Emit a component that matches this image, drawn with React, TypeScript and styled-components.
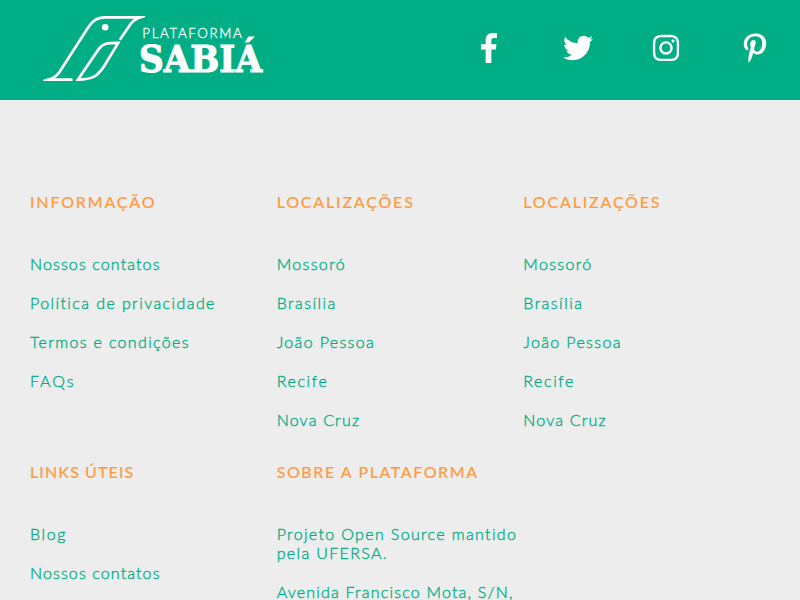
import React from "react";
import styled, { createGlobalStyle } from "styled-components";
import { FaTwitter, FaInstagram, FaPinterestP } from "react-icons/fa";

const GlobalStyle = createGlobalStyle`
  * { box-sizing: border-box; margin: 0; padding: 0; }
  html, body { height: 100%; overflow: hidden; }
  body { background: #ededed; font-family: Lato, sans-serif; }
`;

const Header = styled.header`
  display: flex;
  align-items: center;
  height: 100px;
  background: #00ad85;
  color: #fff;
`;

const Logo = styled.svg`
  display: block;
  width: 230px;
  height: 100px;
  margin-left: 40px;
  overflow: visible;
`;

const SocialList = styled.nav`
  display: grid;
  grid-template-columns: repeat(4, 88.67px);
  margin-left: 174.75px;
  padding-bottom: 4px;
`;

const SocialLink = styled.a`
  display: flex;
  justify-content: center;
  color: #fff;
  svg { display: block; height: 30px; }
`;

const Footer = styled.footer`
  display: grid;
  grid-template-columns: repeat(3, 246.67px);
  row-gap: 33px;
  padding: 92px 30px 0;
`;

const Column = styled.section``;

const Title = styled.h2<{ $spacing: number }>`
  margin-bottom: 43px;
  color: #ff9b3f;
  font-size: 16px;
  font-weight: 500;
  line-height: 19px;
  letter-spacing: ${(p) => p.$spacing}px;
  -webkit-text-stroke: 0.1px #ff9b3f;
  white-space: nowrap;
`;

const Items = styled.ul`
  display: flex;
  flex-direction: column;
  gap: 20px;
  list-style: none;
`;

const Item = styled.li<{ $spacing: number }>`
  color: #00ad85;
  font-size: 16px;
  font-weight: 300;
  line-height: 19px;
  letter-spacing: ${(p) => p.$spacing}px;
  -webkit-text-stroke: 0.35px #00ad85;
  white-space: pre;
`;

type Entry = [text: string, spacing: number];

const cities: Entry[] = [
  ["Mossoró", 1.35],
  ["Brasília", 1.45],
  ["João Pessoa", 1.35],
  ["Recife", 1.6],
  ["Nova Cruz", 1.2],
];

const columns: { title: Entry; items: Entry[] }[] = [
  {
    title: ["INFORMAÇÃO", 1.8],
    items: [
      ["Nossos contatos", 1.12],
      ["Política de privacidade", 1.41],
      ["Termos e condições", 1.33],
      ["FAQs", 1.95],
    ],
  },
  { title: ["LOCALIZAÇÕES", 1.8], items: cities },
  { title: ["LOCALIZAÇÕES", 1.8], items: cities },
  {
    title: ["LINKS ÚTEIS", 1.1],
    items: [
      ["Blog", 1.6],
      ["Nossos contatos", 1.12],
    ],
  },
  {
    title: ["SOBRE A PLATAFORMA", 1.57],
    items: [
      ["Projeto Open Source mantido\npela UFERSA.", 1.35],
      ["Avenida Francisco Mota, S/N,", 1.2],
    ],
  },
];

const SabiaLogo = () => (
  <Logo viewBox="40 0 230 100" role="img" aria-label="Plataforma Sabiá">
    <g fill="none" stroke="#fff" strokeWidth="2.7" strokeLinejoin="miter">
      <path d="M72.5 79.6H47C52 79.2 56 77 59.5 72L86.5 30C92.5 20.5 96.5 17.3 105.5 17.3H140.5C136 18.3 133.5 20.3 130.5 24.3L119.8 39.8" />
      <path d="M78 79.6L98.5 49.4C103 43.2 107.500 42.900 118.200 42.900L104.500 65.500C97.500 76.500 92.500 79.600 78 79.600Z" />
    </g>
    <path d="M43 81L44 79.3C49 78.7 51 78 54 76.5L56 81Z M139 16H145.5L144.3 17.7C140 18.3 138 19 135 21.5L133 17Z" fill="#fff" />
    <circle cx="105.2" cy="27.2" r="3.3" fill="#fff" />
    <text x="142.3" y="38.2" fill="#fff" fontFamily="Lato" fontWeight="300" fontSize="13.4" stroke="#fff" strokeWidth="0.3" textLength="99.5" lengthAdjust="spacing">PLATAFORMA</text>
    <text x="139" y="72.3" fill="#fff" stroke="#fff" strokeWidth="1.1" fontFamily="DejaVu Serif" fontWeight="700" fontSize="37.8" textLength="123" lengthAdjust="spacingAndGlyphs">SABIÁ</text>
  </Logo>
);

const FacebookIcon = () => (
  <svg width="16" height="30" viewBox="0 0 264 512" preserveAspectRatio="none" fill="currentColor" aria-hidden="true">
    <path d="M76.7 512V283H0v-91h76.7v-71.7C76.7 42.4 124.3 0 193.8 0c33.3 0 61.9 2.5 70.2 3.6V85h-48.2c-37.8 0-45.1 18-45.1 44.3V192H256l-11.7 91h-73.6v229" />
  </svg>
);

export default function App() {
  return (
    <>
      <GlobalStyle />
      <Header>
        <SabiaLogo />
        <SocialList>
          <SocialLink aria-label="Facebook"><FacebookIcon /></SocialLink>
          <SocialLink aria-label="Twitter"><FaTwitter size={30} /></SocialLink>
          <SocialLink aria-label="Instagram"><FaInstagram size={30} /></SocialLink>
          <SocialLink aria-label="Pinterest"><FaPinterestP size={30} /></SocialLink>
        </SocialList>
      </Header>
      <Footer>
        {columns.map(({ title, items }, i) => (
          <Column key={i}>
            <Title $spacing={title[1]}>{title[0]}</Title>
            <Items>
              {items.map(([text, spacing]) => (
                <Item key={text} $spacing={spacing}>{text}</Item>
              ))}
            </Items>
          </Column>
        ))}
      </Footer>
    </>
  );
}
